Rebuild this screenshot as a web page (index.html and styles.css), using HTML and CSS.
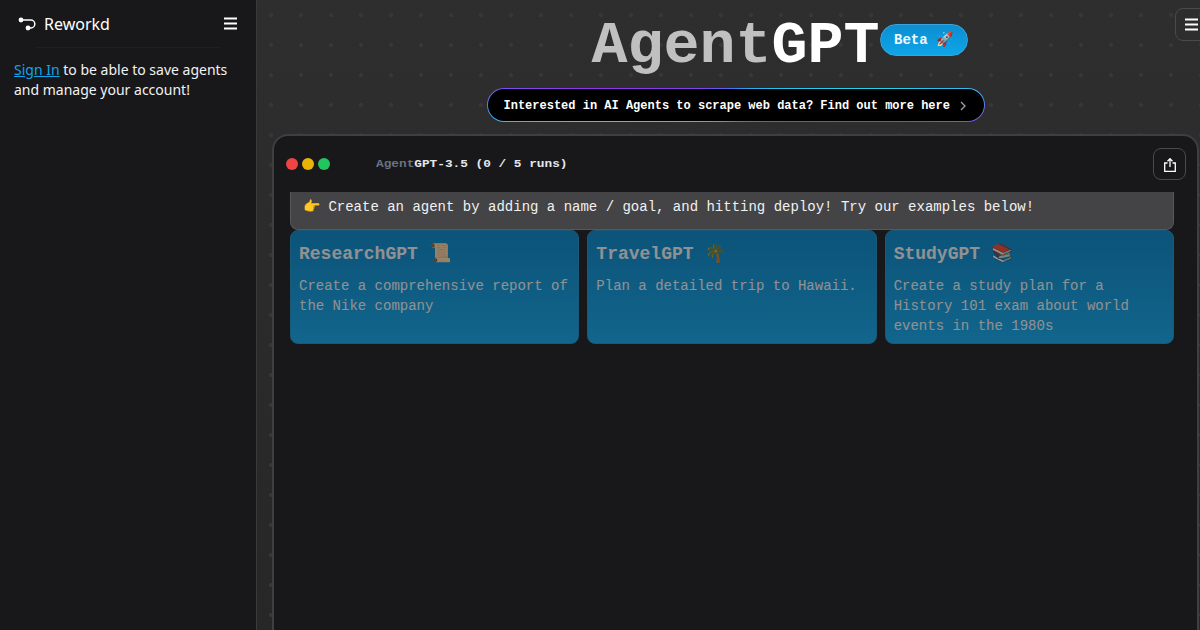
FILE: index.html
```html
<!DOCTYPE html>
<html lang="en">
<head>
<meta charset="utf-8">
<title>AgentGPT</title>
<link rel="stylesheet" href="styles.css">
</head>
<body>
<div class="app">
  <aside class="sidebar">
    <header class="side-head">
      <div class="brand">
        <svg class="logo" width="20" height="16" viewBox="0 0 20 16" fill="none"><circle cx="3" cy="4" r="2.4" fill="#fff"/><circle cx="10" cy="12" r="2.4" fill="#fff"/><path d="M3 4H12.8a4 4 0 0 1 0 8H10" stroke="#fff" stroke-width="1.5"/></svg>
        <span>Reworkd</span>
      </div>
      <svg class="burger" width="13" height="13" viewBox="0 0 13 13"><path d="M0 1.5H13M0 6.5H13M0 11.5H13" stroke="#fff" stroke-width="2"/></svg>
    </header>
    <div class="side-rule"></div>
    <p class="side-note"><a href="#">Sign In</a> to be able to save agents and manage your account!</p>
  </aside>
  <main class="main">
    <button class="corner-btn"><svg class="burger" width="13" height="13" viewBox="0 0 13 13"><path d="M0 1.5H13M0 6.5H13M0 11.5H13" stroke="#fff" stroke-width="2"/></svg></button>
    <h1 class="title"><span class="title-a">Agent</span>GPT<span class="beta">Beta 🚀</span></h1>
    <a class="banner" href="#"><span class="banner-inner">Interested in AI Agents to scrape web data? Find out more here<svg width="6" height="10" viewBox="0 0 6 10" fill="none"><path d="M1 1l4 4-4 4" stroke="#9ca3af" stroke-width="1.3"/></svg></span></a>
    <section class="terminal">
      <div class="term-head">
        <div class="lights"><i class="light red"></i><i class="light yellow"></i><i class="light green"></i></div>
        <div class="term-title"><span class="term-agent">Agent</span>GPT-3.5 (0 / 5 runs)</div>
        <button class="share"><svg class="share-icon" width="12" height="14" viewBox="0 0 12 14" fill="none" stroke="#fff" stroke-width="1.3"><path d="M3.5 5H.7v8.3h10.6V5H8.5"/><path d="M6 9V.8M3.5 3.2L6 .7l2.5 2.5"/></svg></button>
      </div>
      <div class="term-body">
        <div class="intro"><span class="emoji">👉</span> Create an agent by adding a name / goal, and hitting deploy! Try our examples below!</div>
        <div class="cards">
          <article class="card"><h2>ResearchGPT 📜</h2><p>Create a comprehensive report of the Nike company</p></article>
          <article class="card"><h2>TravelGPT 🌴</h2><p>Plan a detailed trip to Hawaii.</p></article>
          <article class="card"><h2>StudyGPT 📚</h2><p>Create a study plan for a History 101 exam about world events in the 1980s</p></article>
        </div>
      </div>
    </section>
  </main>
</div>
</body>
</html>
```
FILE: styles.css
```css
* { box-sizing: border-box; }
html, body { margin: 0; height: 630px; overflow: hidden; background: #18181b; }
body { font-family: "Noto Sans", sans-serif; color: #fff; }
.app { display: flex; height: 630px; }

.sidebar { width: 257px; flex: none; background: #18181b; border-right: 1px solid #3a3a3c; padding: 0 14px; }
.side-head { display: flex; align-items: center; justify-content: space-between; height: 47px; padding: 0 5px 0 4px; }
.brand { display: flex; align-items: center; gap: 6px; font-size: 16px; }
.logo { margin-top: 1px; }
.side-rule { height: 1px; margin: 0 22px; background: #1f1f22; }
.side-note { margin: 12px 0 0; font-size: 14px; line-height: 20px; color: #f2f2f2; }
.side-note a { color: #0ea5e9; }

.main { position: relative; flex: 1; min-width: 0; overflow: hidden; display: flex; flex-direction: column; align-items: center; padding: 16px 1px 0 15px;
  background-color: #2a2a2a;
  background-image: radial-gradient(circle at 14px 15px, #373737 0, #373737 1.6px, transparent 2.4px), linear-gradient(#2e2e2e, #272727);
  background-size: 30px 30px, 100% 100%; }
.corner-btn { position: absolute; top: 8px; right: -8px; width: 33px; height: 33px; padding: 0; display: flex; align-items: center; justify-content: center; background: transparent; border: 1px solid #4a4a4d; border-radius: 8px; }

.title { position: relative; flex: none; margin: 0; font: 700 60px/60px "Liberation Mono", monospace; color: #fff; white-space: nowrap; }
.title-a { color: #c0c0c0; }
.beta { position: absolute; left: 100%; top: 8px; width: 88px; height: 32px; display: flex; align-items: center; justify-content: center; font-size: 14px; line-height: 20px; font-weight: 700; color: #f0f9ff; border: 1px solid #38a4db; border-radius: 16px; background: linear-gradient(#0c8ed0, #0ea5e9); }

.banner { display: block; flex: none; margin-top: 12px; width: 498px; height: 34px; padding: 1px; border-radius: 17px; text-decoration: none; background: conic-gradient(#3b82f6 0deg, #22d3ee 84deg, #9333ea 96deg, #3b82f6 180deg, #22d3ee 264deg, #9333ea 276deg, #3b82f6 360deg); }
.banner-inner { display: flex; align-items: center; gap: 10px; height: 100%; padding: 1px 0 0 16px; border-radius: 16px; background: #000; color: #fff; font: 700 12px/16px "Liberation Mono", monospace; white-space: nowrap; }

.terminal { width: 927px; flex: none; margin-top: 12px; height: 600px; background: #18181b; border: 2px solid #3f3f42; border-radius: 16px; font-family: "Liberation Mono", monospace; }
.term-head { position: relative; display: flex; align-items: center; height: 56px; padding: 0 11px 0 12px; }
.lights { display: flex; gap: 4px; }
.light { width: 12px; height: 12px; border-radius: 50%; }
.red { background: #ef4444; }
.yellow { background: #eab308; }
.green { background: #22c55e; }
.term-title { margin-left: 46px; font-size: 11px; line-height: 16px; font-weight: 700; color: #e5e7eb; transform: scaleX(1.16); transform-origin: left center; }
.term-agent { color: #6b7280; }
.share { margin-left: auto; width: 33px; height: 32px; padding: 0; display: flex; align-items: center; justify-content: center; background: transparent; border: 1px solid #4a4a4d; border-radius: 8px; }
.share-icon { margin-top: 1px; }

.term-body { padding: 0 23px 0 16px; }
.intro { height: 38px; padding: 5px 12px 3px; font-size: 14px; line-height: 20px; color: #f1f1f1; background: #444446; border: 1px solid #58585a; border-top: 0; border-radius: 0 0 8px 8px; }
.cards { display: grid; grid-template-columns: repeat(3, 1fr); gap: 8px; }
.card { height: 114px; padding: 9px 8px 7px; border: 1px solid #1e8fc5; border-radius: 8px; background: linear-gradient(#0284c7, #0ea5e9); opacity: .55; color: #f4f4f4; }
.card h2 { margin: 0 0 8px; font-size: 18px; line-height: 28px; font-weight: 700; }
.card p { margin: 0; font-size: 14px; line-height: 20px; }
```
